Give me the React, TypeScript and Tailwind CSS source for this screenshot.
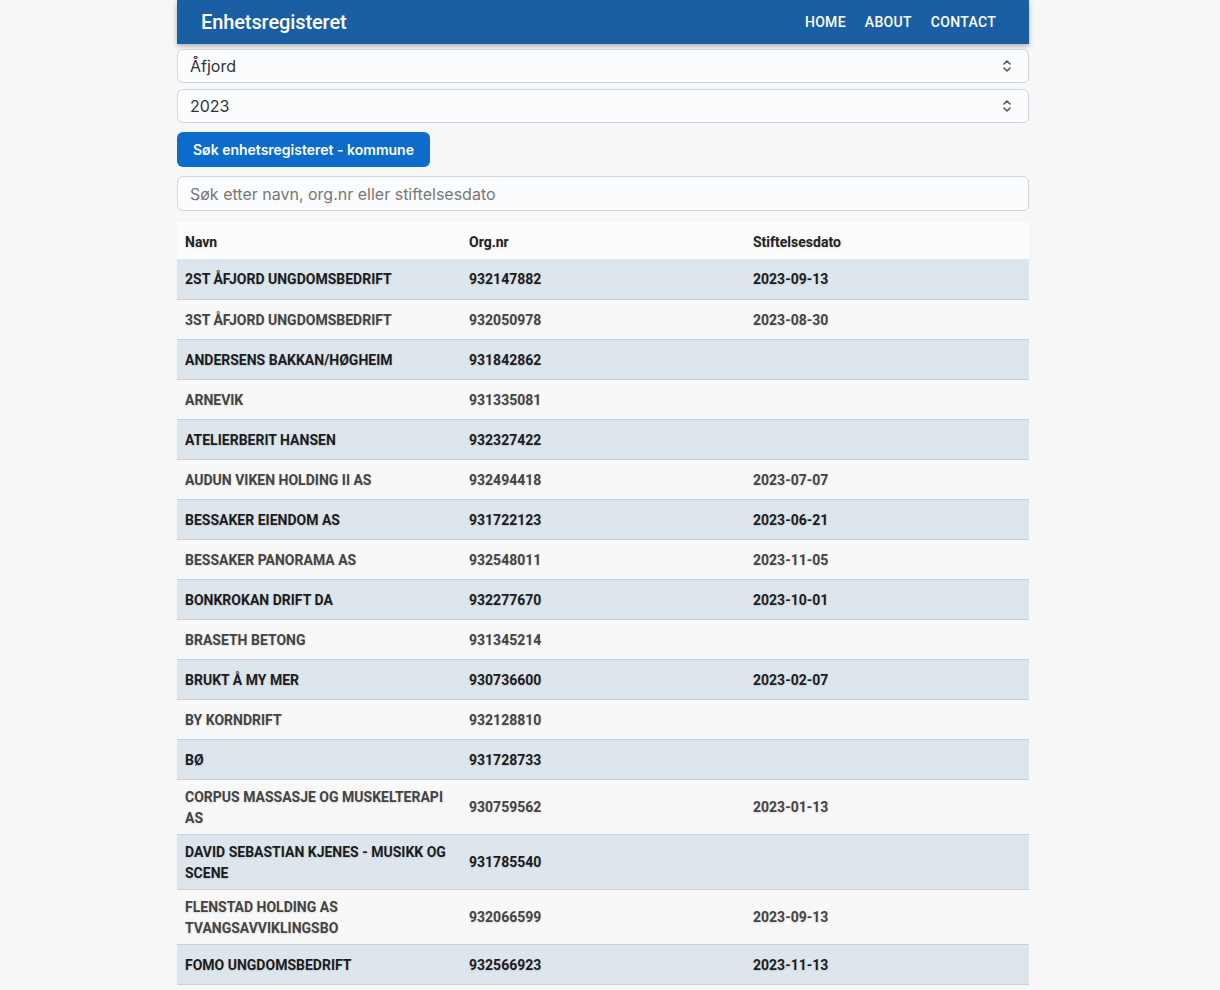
const rows: [string, string, string][] = [
  ['2ST ÅFJORD UNGDOMSBEDRIFT', '932147882', '2023-09-13'],
  ['3ST ÅFJORD UNGDOMSBEDRIFT', '932050978', '2023-08-30'],
  ['ANDERSENS BAKKAN/HØGHEIM', '931842862', ''],
  ['ARNEVIK', '931335081', ''],
  ['ATELIERBERIT HANSEN', '932327422', ''],
  ['AUDUN VIKEN HOLDING II AS', '932494418', '2023-07-07'],
  ['BESSAKER EIENDOM AS', '931722123', '2023-06-21'],
  ['BESSAKER PANORAMA AS', '932548011', '2023-11-05'],
  ['BONKROKAN DRIFT DA', '932277670', '2023-10-01'],
  ['BRASETH BETONG', '931345214', ''],
  ['BRUKT Å MY MER', '930736600', '2023-02-07'],
  ['BY KORNDRIFT', '932128810', ''],
  ['BØ', '931728733', ''],
  ['CORPUS MASSASJE OG MUSKELTERAPI AS', '930759562', '2023-01-13'],
  ['DAVID SEBASTIAN KJENES - MUSIKK OG SCENE', '931785540', ''],
  ['FLENSTAD HOLDING AS TVANGSAVVIKLINGSBO', '932066599', '2023-09-13'],
  ['FOMO UNGDOMSBEDRIFT', '932566923', '2023-11-13'],
]

function Chevrons() {
  return (
    <svg width="10" height="16" viewBox="0 0 10 16" fill="none" stroke="#555" strokeWidth="1.6" strokeLinecap="round" strokeLinejoin="round">
      <path d="M2 6 L5 3 L8 6" />
      <path d="M2 10 L5 13 L8 10" />
    </svg>
  )
}

function Select({ value }: { value: string }) {
  return (
    <div className="h-[34px] flex items-center justify-between bg-[#fbfcfe] border border-[#cbd6e2] rounded-md pl-[12px] pr-[16px] text-[16px] text-[#333] font-['Inter',sans-serif]">
      <span>{value}</span>
      <Chevrons />
    </div>
  )
}

export default function App() {
  return (
    <div className="min-h-screen bg-[#f7f7f7] font-['Roboto',sans-serif] pb-[20px]">
      <div className="w-[852px] ml-[177px]">

        {/* ── Navbar ── */}
        <nav className="h-[44px] bg-[#1a5ea4] flex items-center justify-between pl-[24px] pr-[33px] shadow-[0_2px_5px_rgba(0,0,0,0.3)]">
          <span className="text-white text-[20px] font-medium tracking-[-0.1px]">Enhetsregisteret</span>
          <div className="flex gap-[19px] text-white text-[14px] font-medium tracking-[0.3px]">
            <a href="#">HOME</a>
            <a href="#">ABOUT</a>
            <a href="#">CONTACT</a>
          </div>
        </nav>

        {/* ── Filters ── */}
        <div className="pt-[5px] space-y-[6px]">
          <Select value="Åfjord" />
          <Select value="2023" />
        </div>

        <button className="mt-[9px] h-[35px] px-[16px] bg-[#0c6bcb] text-white text-[14px] font-semibold rounded-md font-['Inter',sans-serif]">
          Søk enhetsregisteret - kommune
        </button>

        <div className="mt-[9px] h-[35px] flex items-center bg-[#fbfcfe] border border-[#cbd6e2] rounded-md px-[12px] text-[16px] text-[#777] font-['Inter',sans-serif]">
          Søk etter navn, org.nr eller stiftelsesdato
        </div>

        {/* ── Table ── */}
        <table className="mt-[11px] w-full table-fixed border-collapse text-[14px] font-bold [text-shadow:0_1px_2px_rgba(0,0,0,0.12)]">
          <thead>
            <tr className="bg-[#fcfcfd] text-[14px] text-[#222]">
              <th className="h-[37px] text-left px-[8px] pt-[3px]">Navn</th>
              <th className="text-left px-[8px] pt-[3px]">Org.nr</th>
              <th className="text-left px-[8px] pt-[3px]">Stiftelsesdato</th>
            </tr>
          </thead>
          <tbody>
            {rows.map(([name, org, date], i) => (
              <tr
                key={org}
                className={
                  'border-b border-[#c6d1db] leading-[21px] ' +
                  (i % 2 === 0 ? 'bg-[#dde6ed] text-[#1c1c1c]' : 'bg-[#f8f8f8] text-[#444]')
                }
              >
                <td className="h-[40px] px-[8px] pt-[7px] pb-[5px] align-middle">{name}</td>
                <td className="px-[8px] pt-[7px] pb-[5px] align-middle">{org}</td>
                <td className="px-[8px] pt-[7px] pb-[5px] align-middle">{date}</td>
              </tr>
            ))}
          </tbody>
        </table>
      </div>
    </div>
  )
}
